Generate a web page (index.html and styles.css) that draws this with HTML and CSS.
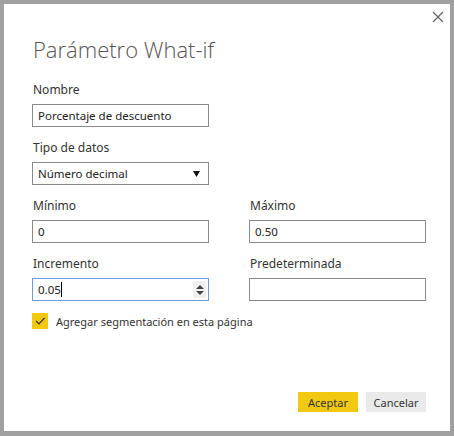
FILE: index.html
```html
<!DOCTYPE html>
<html lang="es">
<head>
<meta charset="utf-8">
<title>Parámetro What-if</title>
<link rel="stylesheet" href="styles.css">
</head>
<body>
<div class="dialog">
  <svg class="close" width="12" height="12" viewBox="0 0 12 12"><path d="M1 1 L11 11 M11 1 L1 11" stroke="#666" stroke-width="1.2" fill="none"/></svg>
  <h1 class="title">Parámetro What-if</h1>
  <div class="form">
    <div class="field">
      <div class="label">Nombre</div>
      <div class="input">Porcentaje de descuento</div>
    </div>
    <div class="field">
      <div class="label">Tipo de datos</div>
      <div class="input select">Número decimal
        <svg class="arrow" width="7" height="6" viewBox="0 0 7 6"><path d="M0 0 H7 L3.5 6 Z" fill="#111"/></svg>
      </div>
    </div>
    <div class="grid">
      <div class="field">
        <div class="label">Mínimo</div>
        <div class="input">0</div>
      </div>
      <div class="field">
        <div class="label">Máximo</div>
        <div class="input">0.50</div>
      </div>
      <div class="field">
        <div class="label">Incremento</div>
        <div class="input focus">0.05<span class="caret"></span>
          <span class="spin"><svg width="8" height="12" viewBox="0 0 8 12"><path d="M0 5 L4 1 L8 5 Z M0 7 L8 7 L4 11 Z" fill="#444"/></svg></span>
        </div>
      </div>
      <div class="field">
        <div class="label">Predeterminada</div>
        <div class="input"></div>
      </div>
    </div>
    <div class="check-row">
      <span class="checkbox"><svg width="16" height="16" viewBox="0 0 16 16"><path d="M4 8 L7 11 L12.5 5" stroke="#333" stroke-width="1.2" fill="none"/></svg></span>
      <span class="check-label">Agregar segmentación en esta página</span>
    </div>
  </div>
  <div class="buttons">
    <button class="btn primary">Aceptar</button>
    <button class="btn secondary">Cancelar</button>
  </div>
</div>
</body>
</html>
```

FILE: styles.css
```css
html, body {
  margin: 0;
  padding: 0;
  background: #a0a0a0;
}
body {
  width: 454px;
  height: 436px;
  padding: 4px 4px 5px 4px;
  box-sizing: border-box;
  font-family: "Noto Sans", "Open Sans", sans-serif;
  font-size: 11.5px;
  color: #333;
}
.dialog {
  position: relative;
  background: #fff;
  height: 427px;
  padding: 0 24px 0 28px;
  box-sizing: border-box;
  display: flex;
  flex-direction: column;
}
.close {
  position: absolute;
  top: 7px;
  right: 6px;
}
.title {
  margin: 30px 0 0 1px;
  font-family: "Open Sans", "Noto Sans", sans-serif;
  font-weight: 300;
  font-size: 22px;
  line-height: 30px;
  color: #555;
  height: 30px;
}
.form {
  margin-top: 17px;
  display: flex;
  flex-direction: column;
  gap: 12px;
}
.field {
  display: flex;
  flex-direction: column;
  gap: 5px;
  width: 177px;
}
.label {
  height: 18px;
  line-height: 18px;
  padding-left: 1px;
  color: #333;
  font-size: 12px;
}
.input {
  position: relative;
  height: 23px;
  line-height: 21px;
  border: 1px solid #8a8a8a;
  box-sizing: border-box;
  padding-left: 5px;
  color: #222;
  white-space: nowrap;
}
.select .arrow {
  position: absolute;
  right: 8px;
  top: 8px;
}
.focus {
  border-color: #6a9be0;
}
.caret {
  display: inline-block;
  width: 1px;
  height: 15px;
  background: #000;
  vertical-align: -3px;
}
.spin {
  position: absolute;
  right: 2px;
  top: 2px;
  width: 13px;
  height: 17px;
  background: #f0f0f0;
  display: flex;
  align-items: center;
  justify-content: center;
}
.grid {
  display: grid;
  grid-template-columns: 177px 177px;
  column-gap: 40px;
  row-gap: 12px;
}
.check-row {
  display: flex;
  align-items: center;
  gap: 8px;
  height: 16px;
}
.checkbox {
  width: 16px;
  height: 16px;
  background: #f2c811;
  display: block;
}
.checkbox svg { display: block; }
.check-label {
  color: #333;
  font-size: 11px;
}
.buttons {
  margin-top: auto;
  margin-bottom: 19px;
  display: flex;
  justify-content: flex-end;
  gap: 8px;
}
.btn {
  width: 60px;
  height: 20px;
  border: none;
  padding: 0;
  font-family: "Noto Sans", "Open Sans", sans-serif;
  font-size: 11px;
  color: #333;
}
.primary { background: #f2c811; }
.secondary { background: #eaeaea; }
```
